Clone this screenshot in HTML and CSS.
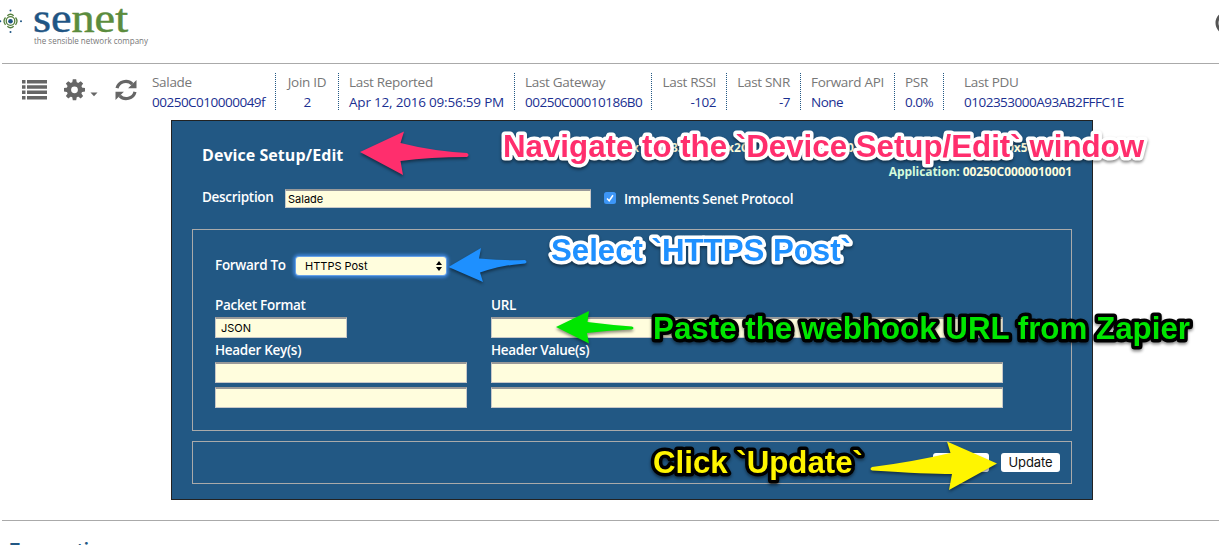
FILE: index.html
```html
<!DOCTYPE html>
<html lang="en">
<head>
<meta charset="utf-8">
<title>Senet Device Setup</title>
<link rel="stylesheet" href="styles.css">
</head>
<body>
<header class="header">
  <svg class="logo" width="160" height="50" viewBox="0 0 160 50">
    <g fill="none" stroke="#537f3c" stroke-width="1.3">
      <path d="M7.3 15.8Q10.5 12.8 13.7 15.8M7.3 26.2Q10.5 29.2 13.7 26.2M5.5 17.5Q2.5 21 5.5 24.8M15.5 17.5Q18.5 21 15.5 24.8"/>
      <circle cx="10.5" cy="21" r="4.3"/>
    </g>
    <g fill="#1f5584"><circle cx="10.5" cy="21.3" r="2.3"/><circle cx="10.5" cy="10.5" r="1"/><circle cx="10.5" cy="32" r="1"/><circle cx="0.3" cy="21.3" r="1"/><circle cx="21" cy="21.3" r="1"/></g>
    <text class="brand" x="33" y="32" textLength="95" lengthAdjust="spacingAndGlyphs"><tspan class="brand-blue">se</tspan><tspan class="brand-green">net</tspan></text>
    <text class="tagline" x="34" y="44" textLength="114" lengthAdjust="spacingAndGlyphs">the sensible network company</text>
  </svg>
  <svg class="account" width="4" height="24" viewBox="0 0 4 24"><circle cx="12" cy="12" r="10" fill="none" stroke="#555" stroke-width="3"/></svg>
</header>
<section class="device-bar">
  <div class="tools">
    <svg class="tool-list" width="25" height="20" viewBox="0 0 25 20"><path fill="#666" d="M0 0h3.5v3.5H0zM5 0h20v3.5H5zM0 5.3h3.5v3.5H0zM5 5.3h20v3.5H5zM0 10.6h3.5v3.5H0zM5 10.6h20v3.5H5zM0 15.9h3.5v3.5H0zM5 15.9h20v3.5H5z"/></svg>
    <svg class="tool-gear" width="34" height="22" viewBox="0 0 34 22"><g transform="translate(10.5 10.8)" fill="#666"><path fill-rule="evenodd" d="M-7.8 0a7.8 7.8 0 1 0 15.6 0a7.8 7.8 0 1 0-15.6 0M-3.4 0a3.4 3.4 0 1 1 6.8 0a3.4 3.4 0 1 1-6.8 0"/><g id="teeth"><path id="tooth" d="M-2.4-6.5L-1.7-10.5H1.7L2.4-6.5zM-2.4 6.5L-1.7 10.5H1.7L2.4 6.5z"/><use href="#tooth" transform="rotate(45)"/></g><use href="#teeth" transform="rotate(90)"/></g><path fill="#666" d="M26.5 13.5h7l-3.5 3.7z"/></svg>
    <svg class="tool-refresh" width="22" height="22" viewBox="0 0 22 22"><g fill="none" stroke="#666" stroke-width="3.2"><path d="M2 9.2A9 8.8 0 0 1 17.3 5.2"/><path d="M20 12.8A9 8.8 0 0 1 4.7 16.8"/></g><path fill="#666" d="M21.5 1v8.3h-8.4zM.5 21v-8.3h8.4z"/></svg>
  </div>
  <div class="stat stat-name"><span class="label">Salade</span><span class="value">00250C010000049f</span></div>
  <div class="stat stat-join"><span class="label">Join ID</span><span class="value">2</span></div>
  <div class="stat stat-reported"><span class="label">Last Reported</span><span class="value">Apr 12, 2016 09:56:59 PM</span></div>
  <div class="stat stat-gateway"><span class="label">Last Gateway</span><span class="value">00250C00010186B0</span></div>
  <div class="stat stat-rssi"><span class="label">Last RSSI</span><span class="value">-102</span></div>
  <div class="stat stat-snr"><span class="label">Last SNR</span><span class="value">-7</span></div>
  <div class="stat stat-api"><span class="label">Forward API</span><span class="value">None</span></div>
  <div class="stat stat-psr"><span class="label">PSR</span><span class="value">0.0%</span></div>
  <div class="stat stat-pdu"><span class="label">Last PDU</span><span class="value">0102353000A93AB2FFFC1E</span></div>
</section>
<main class="dialog">
  <div class="dialog-head"><h1 class="title">Device Setup/Edit</h1><p class="application"><span class="app-label">Application:</span> 00250C0000010001</p></div>
  <div class="description">
    <span class="field-label desc-label">Description</span>
    <div class="input desc-input">Salade</div>
    <svg class="check" width="12" height="12" viewBox="0 0 12 12"><rect width="12" height="12" rx="2.5" fill="#3d96f7"/><path d="M3 6.4l2.2 2.3L9 3.3" fill="none" stroke="#fff" stroke-width="1.5"/></svg>
    <span class="field-label protocol">Implements Senet Protocol</span>
  </div>
  <section class="panel forwarding">
    <div class="forward-row">
      <span class="field-label forward-label">Forward To</span>
      <div class="select"><span>HTTPS Post</span><svg width="6" height="10" viewBox="0 0 6 10"><path d="M0 4l3-4 3 4zM0 6h6l-3 4z"/></svg></div>
    </div>
    <div class="fields">
      <div class="column">
        <span class="field-label">Packet Format</span><div class="input format">JSON</div>
        <span class="field-label second">Header Key(s)</span><div class="input"></div><div class="input extra"></div>
      </div>
      <div class="column">
        <span class="field-label">URL</span><div class="input"></div>
        <span class="field-label second">Header Value(s)</span><div class="input"></div><div class="input extra"></div>
      </div>
    </div>
  </section>
  <section class="panel actions"><div class="button cancel"></div><div class="button">Update</div></section>
</main>
<section class="transactions"><h2 class="section-title">Transactions</h2></section>

<svg class="callouts" width="1219" height="545" viewBox="0 0 1219 545">
  <g class="key-text"><text x="501" y="152">.</text><text x="632" y="152">x1</text><text x="671" y="152">33</text><text x="727" y="152">x2C</text><text x="847" y="152">0</text><text x="1007" y="152">0x54</text></g>
  <g class="shadow">
    <path fill="#ff2e6d" d="M360 152L404 131.500L400.500 143Q432 151 467 153Q470 155 467 157Q430 157 400.500 161L403 175Z"/>
    <path fill="#1e90ff" d="M448.500 267L481 248L479 258.500Q504 261 525 260Q528 262 525 263.500Q502 265 480 272.500L483 282Z"/>
    <path fill="#00e600" d="M556 327L589 311L587.500 322Q611 325 632 326.500Q635 328 632 329.500Q609 330 587 333L589 343.500Z"/>
    <path fill="#fff500" d="M872 467Q912 462 950.500 453L947 441.500L997 463.500L949 490L952 474Q928 474 872 470.500Q869 469 872 467Z"/>
  </g>
  <g class="callout">
    <text class="pink" x="503" y="157" textLength="641" lengthAdjust="spacingAndGlyphs">Navigate to the `Device Setup/Edit` window</text>
    <text class="blue" x="551" y="260.500" textLength="300" lengthAdjust="spacingAndGlyphs">Select `HTTPS Post`</text>
    <text class="green" x="653" y="339" textLength="537" lengthAdjust="spacingAndGlyphs">Paste the webhook URL from Zapier</text>
    <text class="yellow" x="653" y="473" textLength="210" lengthAdjust="spacingAndGlyphs">Click `Update`</text>
  </g>
</svg>
</body>
</html>
```
FILE: styles.css
```css
* { box-sizing: border-box; }
body { margin: 0; width: 1219px; height: 545px; overflow: hidden; position: relative; background: #fff; font-family: "Open Sans", "Noto Sans", sans-serif; font-size: 13.5px; }
h1, h2, p { margin: 0; }
svg { display: block; flex: none; }

.header { height: 64px; margin-left: 2px; border-bottom: 1px solid #aaa; display: flex; justify-content: space-between; }
.logo { margin-left: -2px; }
.account { margin-top: 11px; }
.brand { font: 41px "Liberation Serif", serif; stroke-width: .5px; }
.brand-blue { fill: #1f5584; stroke: #1f5584; }
.brand-green { fill: #5b8c3d; stroke: #5b8c3d; }
.tagline { font-size: 9.5px; fill: #777; }

.device-bar { height: 56px; display: flex; }
.tools { width: 142px; display: flex; padding-left: 22px; flex: none; }
.tool-list { margin-top: 16px; }
.tool-gear { margin: 15px 0 0 17px; }
.tool-refresh { margin: 15px 0 0 17px; }
.stat { height: 37px; margin-top: 9px; padding-left: 10px; border-right: 1px dotted #225884; display: flex; flex-direction: column; flex: none; line-height: 20px; white-space: nowrap; }
.label { color: #777; margin-top: -1px; letter-spacing: -.3px; }
.value { color: #1a2f91; letter-spacing: -.5px; }
.stat-name { width: 134px; }
.stat-join { width: 63px; padding-right: 10px; text-align: center; }
.stat-reported { width: 176px; }
.stat-reported .value { letter-spacing: -.2px; }
.stat-gateway { width: 137px; }
.stat-rssi { width: 75px; padding-right: 10px; text-align: right; }
.stat-snr { width: 74px; padding-right: 10px; text-align: right; }
.stat-api { width: 94px; }
.stat-psr { width: 49px; }
.stat-pdu { padding-left: 20px; border: 0; }

.dialog { width: 922px; height: 380px; margin-left: 171px; padding: 0 20px; background: #225884; border: 1px solid #222; color: #fff; }
.dialog-head { height: 68px; display: flex; justify-content: space-between; padding-left: 10px; }
.title { margin-top: 23px; font-size: 16px; line-height: 22px; letter-spacing: .05px; font-weight: 700; }
.application { margin-top: 42px; font-size: 12px; line-height: 18px; font-weight: 700; color: #fffddb; letter-spacing: -.08px; }
.app-label { color: #d5fbdc; }
.field-label { font-weight: 600; line-height: 18px; font-size: 13.5px; letter-spacing: -.3px; white-space: nowrap; }
.description { height: 40px; display: flex; padding-left: 10px; align-items: flex-start; }
.desc-label { width: 83px; margin-top: -1px; }
.protocol { margin-top: 1px; }
.input { height: 21px; background: #fffddd; border: 1px solid #c8c8c8; border-top: 2px solid #999; color: #000; font: 11px/18px Inter, "Liberation Sans", sans-serif; }
.desc-input { width: 306px; height: 19px; padding-left: 2px; line-height: 17px; }
.check { margin: 3px 8px 0 13px; }
.panel { border: 1px solid #aaa; }
.forwarding { height: 202px; padding: 27px 22px 0; }
.forward-row { display: flex; height: 39px; }
.forward-label { width: 81px; margin-top: -1px; }
.select { width: 150px; height: 18px; border-radius: 3px; background: #fffddd; box-shadow: 0 0 0 1px #68a2e8, 0 0 3px 3px #3b7fce; color: #000; display: flex; align-items: center; justify-content: space-between; padding: 0 4px 0 9px; font: 11px Inter, sans-serif; }
.fields { display: grid; grid-template-columns: 252px 512px; column-gap: 24px; }
.column { display: flex; flex-direction: column; }
.column .field-label { height: 21px; }
.column .second { height: 21px; margin-top: 3px; }
.format { width: 132px; padding-left: 5px; }
.extra { margin-top: 4px; }
.actions { height: 43px; margin-top: 10px; padding: 11px 11px 0; display: flex; justify-content: flex-end; gap: 12px; }
.button { width: 59px; height: 19px; border-radius: 3px; background: #fff; color: #111; font: 13px/19px Inter, sans-serif; text-align: center; letter-spacing: -.1px; }
.cancel { width: 56px; }

.transactions { margin: 20px 0 0 2px; border-top: 1px solid #aaa; padding: 17px 0 0 8px; height: 25px; overflow: hidden; }
.section-title { font-size: 17px; line-height: 24px; color: #225884; }

.callouts { position: absolute; left: 0; top: 0; }
.key-text { fill: #fffddb; font-size: 12px; font-weight: 700; }
.shadow path, .callout text { filter: drop-shadow(0 2px 1.5px rgba(0, 0, 0, .45)); }
.callout text { font: bold 31px "Liberation Sans", sans-serif; paint-order: stroke; stroke-width: 7px; stroke-linejoin: round; }
.pink { fill: #ff2e6d; stroke: #fff; }
.blue { fill: #1e90ff; stroke: #fff; }
.green { fill: #00e600; stroke: #000; }
.yellow { fill: #fff500; stroke: #000; }
```
